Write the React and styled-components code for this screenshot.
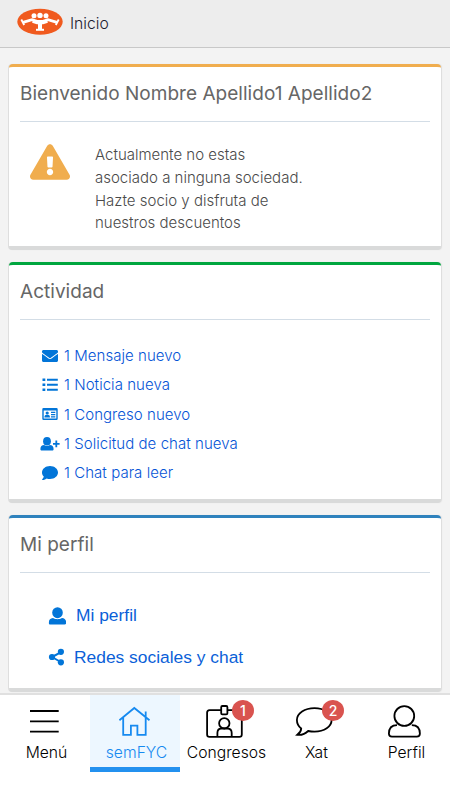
import React from 'react';
import styled, { createGlobalStyle } from 'styled-components';
import { FaEnvelope, FaComment, FaExclamationTriangle } from 'react-icons/fa';

const GlobalStyle = createGlobalStyle`
  * {
    box-sizing: border-box;
  }

  body {
    margin: 0;
    background: #f3f3f3;
    font-family: Inter, 'Liberation Sans', sans-serif;
    font-weight: 300;
  }
`;

const Screen = styled.div`
  height: 800px;
  display: flex;
  flex-direction: column;
  overflow: hidden;
`;

const Header = styled.header`
  height: 48px;
  flex: none;
  display: flex;
  align-items: flex-start;
  gap: 7px;
  padding: 8px 17px 0;
  background: #ededed;
  border-bottom: 1px solid #c8c8c8;
`;

const HeaderTitle = styled.span`
  font-size: 15.7px;
  line-height: 20px;
  margin-top: 6px;
  color: #1c2030;
`;

const Content = styled.main`
  flex: 1;
  min-height: 0;
  padding: 16px 9px 0;
  display: flex;
  flex-direction: column;
  gap: 12px;
`;

const Card = styled.section`
  flex: none;
  height: ${(props) => props.$height}px;
  padding: 0 11px;
  background: #fff;
  border-top: 3px solid ${(props) => props.$accent};
  border-bottom: 4px solid #d9dada;
  border-radius: 4px;
  box-shadow: 1px 0 1px #dcdcdc, -1px 0 0 #dedede;
`;

const CardTitle = styled.h2`
  height: 55px;
  margin: 0;
  padding-top: 15px;
  font-size: 19px;
  line-height: 24px;
  font-weight: 400;
  letter-spacing: 0.03px;
  white-space: nowrap;
  color: #666;
  border-bottom: 1px solid #d3dde6;
`;

const Notice = styled.div`
  display: flex;
  align-items: flex-start;
  padding: 22px 0 0 10px;

  svg {
    width: 40px;
    height: 36px;
    color: #f0ad4e;
  }
`;

const NoticeText = styled.p`
  margin: 0 0 0 25px;
  font-size: 15px;
  line-height: 22.8px;
  color: #4a4a4a;
  white-space: nowrap;
`;

const ActivityList = styled.ul`
  list-style: none;
  margin: 0;
  padding: 21px 0 0 20px;
`;

const ActivityItem = styled.li`
  height: 29.3px;
  display: flex;
  align-items: center;
  gap: 4px;
  font-size: 15px;
  letter-spacing: 0.05px;
  white-space: nowrap;
  color: #0554d6;

  svg {
    width: 20px;
    height: 16px;
    color: #0275d8;
  }
`;

const ProfileLinks = styled.div`
  padding: 22px 0 0 28px;
`;

const ProfileLink = styled.a`
  height: 41.5px;
  display: flex;
  align-items: center;
  gap: ${(props) => props.$gap}px;
  font-family: 'Liberation Sans', sans-serif;
  font-size: 17.4px;
  font-weight: 400;
  color: #0b5fd8;
  white-space: nowrap;

  svg {
    width: 18px;
    height: 18px;
    color: #0275d8;
  }
`;

const TabBar = styled.nav`
  flex: none;
  height: 107px;
  display: grid;
  grid-template-columns: repeat(5, 90px);
  background: #fff;
  border-top: 2px solid #e0e0e0;
`;

const Tab = styled.div`
  height: 77px;
  display: flex;
  flex-direction: column;
  align-items: center;
  padding-top: 7px;
  color: ${(props) => (props.$active ? '#168af0' : '#000')};
  background: ${(props) => (props.$active ? '#edf7ff' : 'transparent')};
  border-bottom: 5px solid
    ${(props) => (props.$active ? '#2391ef' : 'transparent')};
`;

const TabIcon = styled.div`
  position: relative;
  height: 41px;

  svg {
    display: block;
    fill: none;
    stroke: currentColor;
    stroke-width: 1.8;
  }
`;

const TabLabel = styled.span`
  margin-left: 3px;
  font-size: 15.7px;
  line-height: 20px;
`;

const Badge = styled.span`
  position: absolute;
  top: -2px;
  left: 27px;
  width: 22px;
  height: 21px;
  border-radius: 50%;
  background: #d9534f;
  color: #fff;
  font-size: 14px;
  font-weight: 500;
  line-height: 21px;
  text-align: center;
`;

const Logo = () => (
  <svg width="46" height="28" viewBox="0 0 46 28">
    <ellipse cx="23" cy="13.8" rx="22.7" ry="13" fill="#f05a1e" />
    <g fill="#fff">
      <circle cx="17" cy="7.7" r="2.5" />
      <circle cx="23" cy="7.4" r="2.7" />
      <circle cx="29" cy="7.7" r="2.5" />
    </g>
    <g fill="none" stroke="#fff">
      <path d="M6 14.3L15 11.6L20 13.3H26L31 11.6L40 14.3" strokeWidth="2.8" />
      <path d="M4.3 11.5L7.2 17M41.7 11.5L38.8 17" strokeWidth="1.8" />
      <path d="M15.5 13.5L20 15H26L30.5 13.5" strokeWidth="2.4" />
      <path d="M23 13V21.5" strokeWidth="4" />
      <path d="M19 21.8H27" strokeWidth="2" />
    </g>
  </svg>
);

const ListIcon = () => (
  <svg viewBox="0 0 20 16" fill="currentColor">
    <path d="M7 1.8h10.8v2H7zM7 6.8h10.8v2H7zM7 11.8h10.8v2H7z" />
    <path d="M2.5 1.5h2.8v2.6H2.5zM2.5 6.5h2.8v2.6H2.5zM2.5 11.5h2.8v2.6H2.5z" />
  </svg>
);

const CardIcon = () => (
  <svg viewBox="0 0 20 16" fill="currentColor">
    <path
      fillRule="evenodd"
      d="M3.5 2h13a1.2 1.2 0 0 1 1.2 1.2v9.6a1.2 1.2 0 0 1-1.2 1.2h-13a1.2 1.2 0 0 1-1.2-1.2V3.2A1.2 1.2 0 0 1 3.5 2zM3.7 4.5v8h12.6v-8z"
    />
    <circle cx="7.2" cy="7" r="1.6" />
    <path d="M4.4 11.5c0-2 .8-2.7 2.8-2.7s2.8.7 2.8 2.7zM11 5.7h4.3v1.3H11zM11 8h4.3v1.2H11zM11 10.2h4.3v1.2H11z" />
  </svg>
);

const UserPlusIcon = () => (
  <svg viewBox="0 0 20 16" fill="currentColor">
    <ellipse cx="7" cy="5.2" rx="3.9" ry="4.3" />
    <path d="M.4 12.9c0-2.6 1.5-3.7 3.7-3.9 1.7 1.2 4.1 1.2 5.8 0 2.2.2 3.7 1.3 3.7 3.9 0 1-.5 1.5-1.5 1.5H1.9c-1 0-1.5-.5-1.5-1.5z" />
    <path d="M15.4 4.5h1.8V7h2.4v1.8h-2.4v2.5h-1.8V8.8H13V7h2.4z" />
  </svg>
);

const UserIcon = () => (
  <svg viewBox="0 0 18 18" fill="currentColor">
    <ellipse cx="9.5" cy="5.7" rx="5.3" ry="5.5" />
    <path d="M.9 15.2c0-2.6 1.5-3.8 4.1-4.2 2.5 1.6 6.5 1.6 9 0 2.6.4 4.1 1.6 4.1 4.2v1c0 1-.5 1.4-1.5 1.4H2.4c-1 0-1.5-.4-1.5-1.4z" />
  </svg>
);

const ShareIcon = () => (
  <svg viewBox="0 0 18 18" fill="currentColor">
    <path d="M4 9L12.7 4.3M4 9L12.7 14" stroke="currentColor" strokeWidth="2" />
    <circle cx="4" cy="9" r="3.1" />
    <circle cx="12.9" cy="3.8" r="3.1" />
    <circle cx="12.9" cy="14.3" r="3.1" />
  </svg>
);

const MenuIcon = () => (
  <svg width="40" height="40" viewBox="0 0 40 40">
    <path d="M5 9H33.7M5 19.4H33.7M5 29.6H33.7" />
  </svg>
);

const HomeIcon = () => (
  <svg width="40" height="40" viewBox="0 0 40 40">
    <path d="M4.4 18.2L19.3 6L34.5 18.2M8.2 15.6V32.8H15.9V23.6H22.4V32.8H30.7V15.6M30.7 15V9.6" />
  </svg>
);

const BadgeIcon = () => (
  <svg width="40" height="40" viewBox="0 0 40 40">
    <path d="M16.2 8.2H4.5Q2.1 8.2 2.1 10.6V32.4Q2.1 34.8 4.5 34.8H34.4Q36.8 34.8 36.8 32.4V10.6Q36.8 8.2 34.4 8.2H22.6" />
    <rect x="16.2" y="4" width="6.2" height="8.4" rx="1.2" />
    <circle cx="19.3" cy="21.3" r="5.2" />
    <path d="M12.4 34.5V31Q12.4 26.8 16.2 26.5H22.7Q26.7 26.8 26.7 31V34.5" />
  </svg>
);

const ChatIcon = () => (
  <svg width="40" height="40" viewBox="0 0 40 40">
    <path d="M19.5 6.1C9.8 6.1 1.9 11.2 1.9 18C1.9 21.4 3.4 24.3 6.2 26.5C6.2 29 5 30.8 2.3 32.8C6.5 33.2 10.4 31.8 13.2 29C15.2 29.4 17.3 29.6 19.5 29.6C29.3 29.6 36.6 24.6 36.6 18C36.6 11.2 29.3 6.1 19.5 6.1Z" />
  </svg>
);

const PersonIcon = () => (
  <svg width="40" height="40" viewBox="0 0 40 40">
    <circle cx="19.3" cy="14" r="9.9" />
    <path d="M12 23.1C6.5 23.1 3.9 26.6 3.9 31.6Q3.9 34.7 7 34.7H31.8Q34.9 34.7 34.9 31.6C34.9 26.6 32.3 23.1 26.8 23.1" />
  </svg>
);

const activities = [
  { icon: FaEnvelope, text: '1 Mensaje nuevo' },
  { icon: ListIcon, text: '1 Noticia nueva' },
  { icon: CardIcon, text: '1 Congreso nuevo' },
  { icon: UserPlusIcon, text: '1 Solicitud de chat nueva' },
  { icon: FaComment, text: '1 Chat para leer' },
];

const tabs = [
  { icon: MenuIcon, label: 'Menú' },
  { icon: HomeIcon, label: 'semFYC', active: true },
  { icon: BadgeIcon, label: 'Congresos', badge: 1 },
  { icon: ChatIcon, label: 'Xat', badge: 2 },
  { icon: PersonIcon, label: 'Perfil' },
];

const App = () => {
  return (
    <Screen>
      <GlobalStyle />
      <Header>
        <Logo />
        <HeaderTitle>Inicio</HeaderTitle>
      </Header>
      <Content>
        <Card $accent="#f0ad4e" $height={186}>
          <CardTitle>Bienvenido Nombre Apellido1 Apellido2</CardTitle>
          <Notice>
            <FaExclamationTriangle />
            <NoticeText>
              Actualmente no estas
              <br />
              asociado a ninguna sociedad.
              <br />
              Hazte socio y disfruta de
              <br />
              nuestros descuentos
            </NoticeText>
          </Notice>
        </Card>
        <Card $accent="#00a63f" $height={241}>
          <CardTitle>Actividad</CardTitle>
          <ActivityList>
            {activities.map(({ icon: Icon, text }) => (
              <ActivityItem key={text}>
                <Icon />
                {text}
              </ActivityItem>
            ))}
          </ActivityList>
        </Card>
        <Card $accent="#2f82bd" $height={177}>
          <CardTitle>Mi perfil</CardTitle>
          <ProfileLinks>
            <ProfileLink $gap={10}>
              <UserIcon />
              Mi perfil
            </ProfileLink>
            <ProfileLink $gap={8}>
              <ShareIcon />
              Redes sociales y chat
            </ProfileLink>
          </ProfileLinks>
        </Card>
      </Content>
      <TabBar>
        {tabs.map(({ icon: Icon, label, active, badge }) => (
          <Tab key={label} $active={active}>
            <TabIcon>
              <Icon />
              {badge && <Badge>{badge}</Badge>}
            </TabIcon>
            <TabLabel>{label}</TabLabel>
          </Tab>
        ))}
      </TabBar>
    </Screen>
  );
};

export default App;
